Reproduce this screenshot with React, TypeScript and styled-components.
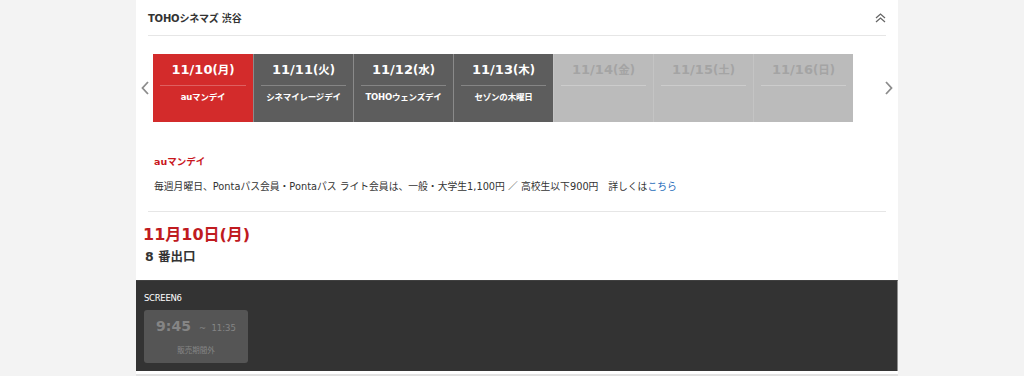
import React from 'react';
import styled, { createGlobalStyle } from 'styled-components';

const GlobalStyle = createGlobalStyle`
  html, body {
    margin: 0;
    padding: 0;
    background: #f3f3f3;
  }
  body {
    font-family: "DejaVu Sans", "Noto Sans CJK JP", sans-serif;
    color: #333;
  }
`;

const Panel = styled.div`
  width: 762px;
  margin-left: 136px;
  background: #fff;
`;

const Header = styled.div`
  display: flex;
  align-items: center;
  justify-content: space-between;
  height: 35px;
  margin: 0 12px;
  border-bottom: 1px solid #e6e6e6;
`;

const TheaterName = styled.h2`
  margin: 0;
  font-size: 10px;
  font-weight: bold;
  color: #333;
  letter-spacing: -0.2px;
`;

const Slider = styled.div`
  display: flex;
  align-items: center;
  padding: 18px 0 0;
`;

const Arrow = styled.div<{ $side: 'left' | 'right' }>`
  flex: ${(p) => (p.$side === 'left' ? '0 0 17px' : '1 1 auto')};
  display: flex;
  justify-content: ${(p) => (p.$side === 'left' ? 'center' : 'flex-end')};
  padding-right: ${(p) => (p.$side === 'right' ? '5px' : '0')};
  svg {
    display: block;
  }
`;

const Tabs = styled.div`
  display: flex;
  flex: 0 0 700px;
  height: 68px;
`;

type TabState = 'active' | 'open' | 'closed';

const tabBg: Record<TabState, string> = {
  active: '#d32b2b',
  open: '#5d5d5d',
  closed: '#bbbbbb',
};

const Tab = styled.div<{ $state: TabState; $first: boolean }>`
  width: 100px;
  box-sizing: border-box;
  background: ${(p) => tabBg[p.$state]};
  border-left: ${(p) =>
    p.$first ? 'none' : p.$state === 'closed' ? '1px solid #c4c4c4' : '1px solid #8a8a8a'};
  color: ${(p) => (p.$state === 'closed' ? '#a4a4a4' : '#fff')};
  padding: 7px 7px 0;
  text-align: center;
`;

const TabDate = styled.div`
  font-size: 13px;
  font-weight: bold;
  height: 24px;
  line-height: 18px;
  border-bottom: 1px solid rgba(255, 255, 255, 0.25);
  white-space: nowrap;
  small {
    font-size: 11.5px;
  }
`;

const TabLabel = styled.div`
  font-size: 8.5px;
  font-weight: bold;
  line-height: 12px;
  padding-top: 5px;
  white-space: nowrap;
  letter-spacing: -0.2px;
`;

const Divider = styled.div`
  height: 1px;
  background: #e6e6e6;
  margin: 0 12px;
`;

const Notice = styled.div`
  padding: 18px 18px 17px;
  margin-top: 15px;
`;

const NoticeTitle = styled.div`
  color: #c9171e;
  font-size: 9.5px;
  font-weight: bold;
  line-height: 14px;
`;

const NoticeText = styled.p`
  margin: 11px 0 0;
  font-size: 9.8px;
  line-height: 14px;
  color: #333;
  white-space: nowrap;
  a {
    color: #2a6ebb;
    text-decoration: none;
  }
`;

const Slash = styled.span`
  color: #666;
`;

const DayBlock = styled.div`
  padding: 12px 7px 14px;
`;

const DayTitle = styled.h3`
  margin: 0;
  color: #c01b1f;
  font-size: 16px;
  font-weight: bold;
  line-height: 22px;
`;

const Spot = styled.div`
  margin: 2px 0 0 2px;
  font-size: 12.5px;
  font-weight: bold;
  line-height: 18px;
  color: #333;
`;

const ScreenArea = styled.div`
  background: #333;
  border-top: 1px solid #404040;
  border-right: 1px solid #8f8f8f;
  padding: 11px 8px 8px;
  height: 71px;
`;

const ScreenName = styled.div`
  color: #fff;
  font-size: 8.5px;
  line-height: 12px;
  letter-spacing: -0.3px;
`;

const Showtime = styled.div`
  margin-top: 6px;
  width: 104px;
  height: 53px;
  box-sizing: border-box;
  background: #555;
  border-radius: 3px;
  padding-top: 8px;
  text-align: center;
  color: #858585;
`;

const TimeRow = styled.div`
  display: flex;
  align-items: baseline;
  justify-content: center;
  gap: 8px;
`;

const StartTime = styled.span`
  font-size: 14px;
  font-weight: bold;
`;

const EndTime = styled.span`
  font-size: 8.5px;
`;

const Status = styled.div`
  font-size: 7.5px;
  margin-top: 10px;
`;

const BottomEdge = styled.div`
  height: 5px;
  background: #fff;
  padding-top: 3px;
  box-sizing: border-box;
  &::after {
    content: '';
    display: block;
    height: 2px;
    background: #e2e2e2;
  }
`;

const tabs: { day: string; week: string; label: string; state: TabState }[] = [
  { day: '11/10', week: '(月)', label: 'auマンデイ', state: 'active' },
  { day: '11/11', week: '(火)', label: 'シネマイレージデイ', state: 'open' },
  { day: '11/12', week: '(水)', label: 'TOHOウェンズデイ', state: 'open' },
  { day: '11/13', week: '(木)', label: 'セゾンの木曜日', state: 'open' },
  { day: '11/14', week: '(金)', label: '', state: 'closed' },
  { day: '11/15', week: '(土)', label: '', state: 'closed' },
  { day: '11/16', week: '(日)', label: '', state: 'closed' },
];

const ChevronLeft = () => (
  <svg width="8" height="14" viewBox="0 0 8 14">
    <path d="M7 1 L1.5 7 L7 13" fill="none" stroke="#8c8c8c" strokeWidth="1.8" />
  </svg>
);

const ChevronRight = () => (
  <svg width="8" height="14" viewBox="0 0 8 14">
    <path d="M1 1 L6.5 7 L1 13" fill="none" stroke="#8c8c8c" strokeWidth="1.8" />
  </svg>
);

const DoubleUp = () => (
  <svg width="11" height="10" viewBox="0 0 11 10">
    <path d="M1 5 L5.5 1 L10 5 M1 9 L5.5 5 L10 9" fill="none" stroke="#666" strokeWidth="1.3" />
  </svg>
);

const App = () => {
  return (
    <>
      <GlobalStyle />
      <Panel>
        <Header>
          <TheaterName>TOHOシネマズ 渋谷</TheaterName>
          <DoubleUp />
        </Header>
        <Slider>
          <Arrow $side="left">
            <ChevronLeft />
          </Arrow>
          <Tabs>
            {tabs.map((t, i) => (
              <Tab key={t.day} $state={t.state} $first={i === 0}>
                <TabDate>
                  {t.day}
                  <small>{t.week}</small>
                </TabDate>
                <TabLabel>{t.label}</TabLabel>
              </Tab>
            ))}
          </Tabs>
          <Arrow $side="right">
            <ChevronRight />
          </Arrow>
        </Slider>
        <Notice>
          <NoticeTitle>auマンデイ</NoticeTitle>
          <NoticeText>
            毎週月曜日、Pontaパス会員・Pontaパス ライト会員は、一般・大学生1,100円 <Slash>／</Slash> 高校生以下900円　詳しくは
            <a href="#">こちら</a>
          </NoticeText>
        </Notice>
        <Divider />
        <DayBlock>
          <DayTitle>11月10日(月)</DayTitle>
          <Spot>8 番出口</Spot>
        </DayBlock>
        <ScreenArea>
          <ScreenName>SCREEN6</ScreenName>
          <Showtime>
            <TimeRow>
              <StartTime>9:45</StartTime>
              <EndTime>~ &nbsp;11:35</EndTime>
            </TimeRow>
            <Status>販売期間外</Status>
          </Showtime>
        </ScreenArea>
        <BottomEdge />
      </Panel>
    </>
  );
};

export default App;
